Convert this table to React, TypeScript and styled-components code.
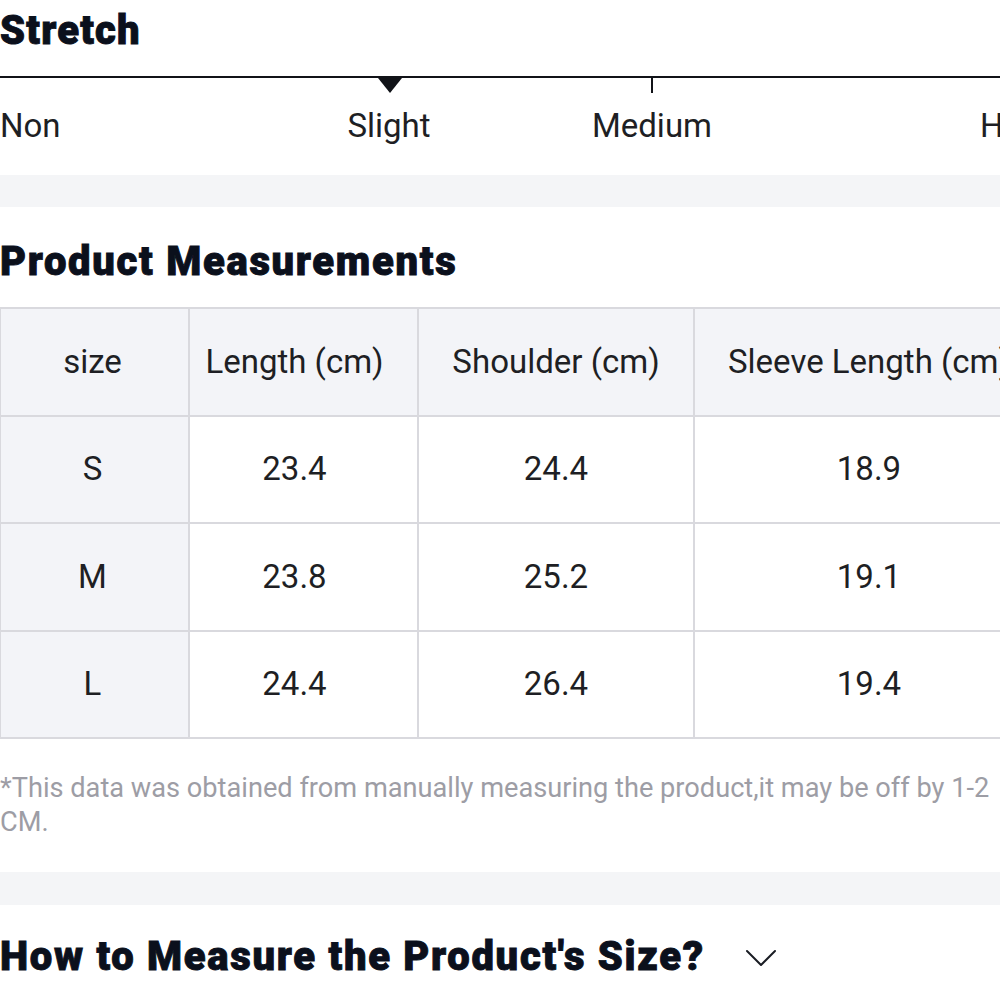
import React from "react";
import styled, { createGlobalStyle } from "styled-components";

const Global = createGlobalStyle`
  html, body {
    margin: 0;
    padding: 0;
    background: #ffffff;
    overflow: hidden;
  }
  body {
    font-family: Roboto, "Noto Sans", "Liberation Sans", sans-serif;
    color: #1c1c1e;
  }
`;

const Page = styled.div`
  width: 1030px;
  display: flex;
  flex-direction: column;
`;

const Section = styled.section<{ $pt: number; $pb: number }>`
  padding-top: ${(p) => p.$pt}px;
  padding-bottom: ${(p) => p.$pb}px;
  background: #ffffff;
`;

const Band = styled.div<{ $h: number }>`
  height: ${(p) => p.$h}px;
  background: #f4f5f7;
`;

const Heading = styled.h2<{ $spacing?: number }>`
  margin: 0;
  font-family: Roboto, "Liberation Sans", sans-serif;
  font-weight: 900;
  font-size: 40px;
  line-height: 48px;
  color: #0b101c;
  letter-spacing: ${(p) => p.$spacing ?? 1.7}px;
  -webkit-text-stroke: 0.9px #0b101c;
  white-space: nowrap;
`;

const Track = styled.div`
  position: relative;
  margin-top: 21px;
  height: 2px;
  background: #111318;
`;

const Pointer = styled.span`
  position: absolute;
  left: 378px;
  top: 2px;
  width: 0;
  height: 0;
  border-left: 12px solid transparent;
  border-right: 12px solid transparent;
  border-top: 15px solid #111318;
`;

const Tick = styled.span`
  position: absolute;
  left: 651px;
  top: 2px;
  width: 2px;
  height: 15px;
  background: #111318;
`;

const Labels = styled.div`
  display: grid;
  grid-template-columns: 260px 258px 268px 1fr;
  margin-top: 28px;
`;

const Label = styled.span<{ $align: "left" | "center"; $indent?: number }>`
  font-size: 33px;
  line-height: 40px;
  color: #1e1f24;
  text-align: ${(p) => p.$align};
  padding-left: ${(p) => p.$indent ?? 0}px;
  white-space: nowrap;
`;

const Table = styled.table`
  margin-top: 21px;
  margin-left: -1px;
  border-collapse: collapse;
  table-layout: fixed;
  width: 1044px;
`;

const Cell = styled.td<{ $shade?: boolean; $shift?: number }>`
  border: 2px solid #d9d9de;
  height: 105.5px;
  padding: 0 ${(p) => p.$shift ?? 0}px 0 0;
  text-align: center;
  vertical-align: middle;
  font-size: 33px;
  line-height: 40px;
  color: #1e1f24;
  font-weight: 400;
  white-space: nowrap;
  background: ${(p) => (p.$shade ? "#f3f4f8" : "#ffffff")};
`;

const Note = styled.p`
  margin: 32px 0 0;
  width: 1020px;
  font-size: 27.2px;
  line-height: 34px;
  color: #9d9da5;
`;

const ToggleRow = styled.div`
  display: flex;
  align-items: center;
  gap: 40px;
`;

const Chevron = styled.svg`
  width: 32px;
  height: 20px;
  flex: none;
  margin-top: 2px;
`;

const rows = [
  ["S", "23.4", "24.4", "18.9"],
  ["M", "23.8", "25.2", "19.1"],
  ["L", "24.4", "26.4", "19.4"],
];

const headers = ["size", "Length (cm)", "Shoulder (cm)", "Sleeve Length (cm)"];
const shifts = [4, 18, 0, 0];

export default function App() {
  return (
    <>
      <Global />
      <Page>
        <Section $pt={7} $pb={29}>
          <Heading $spacing={1.2}>Stretch</Heading>
          <Track>
            <Pointer />
            <Tick />
          </Track>
          <Labels>
            <Label $align="left">Non</Label>
            <Label $align="center">Slight</Label>
            <Label $align="center">Medium</Label>
            <Label $align="left" $indent={194}>High</Label>
          </Labels>
        </Section>
        <Band $h={32} />
        <Section $pt={31} $pb={33}>
          <Heading>Product Measurements</Heading>
          <Table>
            <colgroup>
              <col style={{ width: 189 }} />
              <col style={{ width: 229 }} />
              <col style={{ width: 276 }} />
              <col style={{ width: 350 }} />
            </colgroup>
            <thead>
              <tr>
                {headers.map((h, i) => (
                  <Cell as="th" key={h} $shade $shift={shifts[i]}>
                    {h}
                  </Cell>
                ))}
              </tr>
            </thead>
            <tbody>
              {rows.map((r) => (
                <tr key={r[0]}>
                  {r.map((v, i) => (
                    <Cell key={i} $shade={i === 0} $shift={shifts[i]}>
                      {v}
                    </Cell>
                  ))}
                </tr>
              ))}
            </tbody>
          </Table>
          <Note>
            *This data was obtained from manually measuring the product,it may be off by 1-2 CM.
          </Note>
        </Section>
        <Band $h={33} />
        <Section $pt={28} $pb={20}>
          <ToggleRow>
            <Heading>How to Measure the Product's Size?</Heading>
            <Chevron viewBox="0 0 32 20" fill="none">
              <polyline
                points="2,3 16,17 30,3"
                stroke="#1a1d24"
                strokeWidth="2"
                strokeLinecap="round"
                strokeLinejoin="round"
              />
            </Chevron>
          </ToggleRow>
        </Section>
      </Page>
    </>
  );
}
